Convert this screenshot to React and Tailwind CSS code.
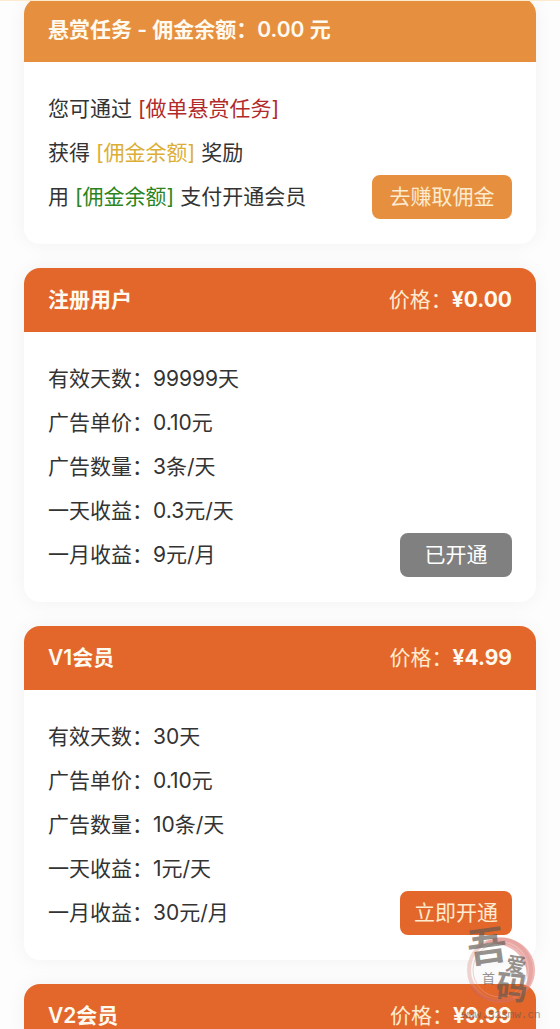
import React, { useState } from 'react';

const plans = [
  { name: '注册用户', price: '¥0.00', days: '99999天', unit: '0.10元', count: '3条/天', daily: '0.3元/天', monthly: '9元/月' },
  { name: 'V1会员', price: '¥4.99', days: '30天', unit: '0.10元', count: '10条/天', daily: '1元/天', monthly: '30元/月' },
  { name: 'V2会员', price: '¥9.99' },
];

const rows = [
  ['days', '有效天数'],
  ['unit', '广告单价'],
  ['count', '广告数量'],
  ['daily', '一天收益'],
  ['monthly', '一月收益'],
];

const Card = ({ header, headerClass, children }) => (
  <section className="overflow-hidden rounded-2xl bg-white shadow-[0_0_20px_rgba(0,0,0,0.05)]">
    <header className={`flex h-16 items-center justify-between px-6 text-[#fffaf0] ${headerClass}`}>
      {header}
    </header>
    {children}
  </section>
);

const PlanCard = ({ plan, opened, onOpen }) => (
  <Card
    headerClass="bg-[#e3672b]"
    header={
      <>
        <h2 className="font-semibold">{plan.name}</h2>
        <p className="text-[#fdebcf]">
          价格：<strong className="font-bold text-[#fffaf0]">{plan.price}</strong>
        </p>
      </>
    }
  >
    {plan.days && (
      <div className="flex items-end justify-between px-6 py-[25px]">
        <dl className="leading-[44px]">
          {rows.map(([key, label]) => (
            <div key={key} className="flex">
              <dt>{label}：</dt>
              <dd>{plan[key]}</dd>
            </div>
          ))}
        </dl>
        {opened ? (
          <button type="button" disabled className="h-11 w-28 rounded-lg bg-[#808080] text-white">已开通</button>
        ) : (
          <button type="button" onClick={onOpen} className="h-11 w-28 rounded-lg bg-[#e3672b] text-[#fdebcf]">立即开通</button>
        )}
      </div>
    )}
  </Card>
);

// Site stamp in the bottom corner
const Watermark = () => (
  <div className="pointer-events-none absolute right-4 bottom-2 flex flex-col items-center text-[#5f5853]">
    <svg viewBox="0 0 86 88" className="h-[88px] w-[86px]" fill="none" aria-hidden="true">
      <circle cx="42" cy="49" r="31" stroke="#d98a80" strokeWidth="4" opacity="0.35" />
      <circle cx="42" cy="49" r="27" stroke="#e0a49b" strokeWidth="1" opacity="0.5" />
      <path d="M26 22C48 8 78 24 77 50c0 10-6 20-14 26c6-8 8-19 5-29C63 29 46 21 26 22z" fill="#e0807a" opacity="0.55" />
      <path d="M14 66c8 12 24 17 40 12" stroke="#c9574d" strokeWidth="3" strokeLinecap="round" opacity="0.35" />
      <g fill="currentColor" opacity="0.65" fontWeight="bold">
        <text x="9" y="40" fontSize="40" transform="rotate(-8 28 25)">吾</text>
        <text x="24" y="62" fontSize="13" fontWeight="normal">首</text>
        <text x="48" y="51" fontSize="20" transform="rotate(12 58 44)">爱</text>
        <text x="38" y="78" fontSize="32" transform="rotate(6 55 66)">码</text>
      </g>
    </svg>
    <span className="font-[Liberation_Mono,monospace] text-[11px] leading-3 opacity-60">www.52smw.cn</span>
  </div>
);

const App = () => {
  const [openedPlans, setOpenedPlans] = useState(['注册用户']);

  return (
    <div className="relative h-screen overflow-hidden border-t border-[#fdebcf] bg-[#fdfdfd] font-[Inter,'Noto_Sans_CJK_SC',sans-serif] text-[21px] text-[#333333]">
      <main className="-mt-[3px] flex flex-col gap-6 px-6">
        <Card
          headerClass="bg-[#e6903f]"
          header={<h2 className="font-semibold">悬赏任务 - 佣金余额：0.00 元</h2>}
        >
          <div className="flex items-end justify-between px-6 py-[25px]">
            <div className="leading-[44px]">
              <p>您可通过 <span className="text-[#b22a2a]">[做单悬赏任务]</span></p>
              <p>获得 <span className="text-[#dcae36]">[佣金余额]</span> 奖励</p>
              <p>用 <span className="text-[#2b8420]">[佣金余额]</span> 支付开通会员</p>
            </div>
            <button type="button" className="h-11 w-[140px] rounded-lg bg-[#e6903f] text-[#fdebcf]">去赚取佣金</button>
          </div>
        </Card>

        {plans.map((plan) => (
          <PlanCard
            key={plan.name}
            plan={plan}
            opened={openedPlans.includes(plan.name)}
            onOpen={() => setOpenedPlans([...openedPlans, plan.name])}
          />
        ))}
      </main>
      <Watermark />
    </div>
  );
};

export default App;
